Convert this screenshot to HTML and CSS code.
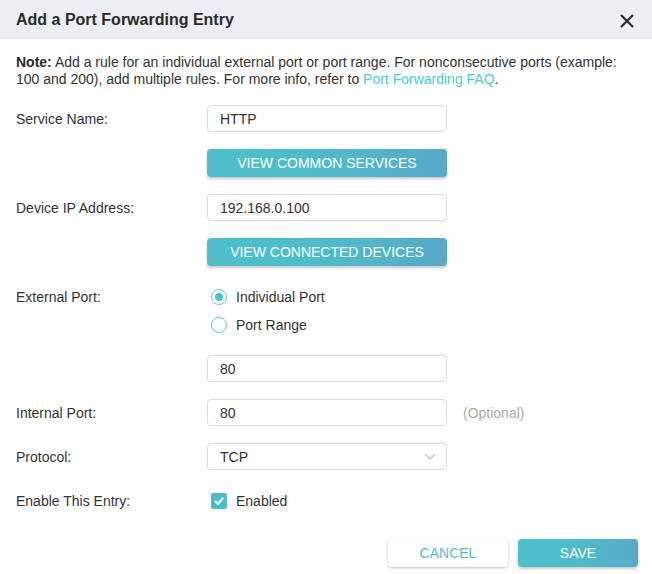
FILE: index.html
```html
<!DOCTYPE html>
<html lang="en">
<head>
<meta charset="utf-8">
<title>Add a Port Forwarding Entry</title>
<link rel="stylesheet" href="styles.css">
</head>
<body>
<div class="dialog">
  <div class="header">
    <h1 class="title">Add a Port Forwarding Entry</h1>
    <button class="close" aria-label="Close">
      <svg width="14" height="14" viewBox="0 0 14 14"><path d="M1 1 L13 13 M13 1 L1 13" stroke="#2b2b2b" stroke-width="2.2" fill="none"/></svg>
    </button>
  </div>
  <div class="content">
    <p class="note"><b>Note:</b> Add a rule for an individual external port or port range. For nonconsecutive ports (example: 100 and 200), add multiple rules. For more info, refer to <a class="link" href="#">Port Forwarding FAQ</a>.</p>
    <div class="form">
      <div class="row">
        <label class="label">Service Name:</label>
        <div class="field"><div class="input">HTTP</div></div>
      </div>
      <div class="row">
        <div class="label"></div>
        <div class="field"><button class="btn primary wide">VIEW COMMON SERVICES</button></div>
      </div>
      <div class="row">
        <label class="label">Device IP Address:</label>
        <div class="field"><div class="input">192.168.0.100</div></div>
      </div>
      <div class="row">
        <div class="label"></div>
        <div class="field"><button class="btn primary wide">VIEW CONNECTED DEVICES</button></div>
      </div>
      <div class="row radios-row">
        <label class="label label-top">External Port:</label>
        <div class="radios">
          <div class="radio-item"><span class="radio checked"></span><span>Individual Port</span></div>
          <div class="radio-item"><span class="radio"></span><span>Port Range</span></div>
        </div>
      </div>
      <div class="row">
        <div class="label"></div>
        <div class="field"><div class="input">80</div></div>
      </div>
      <div class="row">
        <label class="label">Internal Port:</label>
        <div class="field"><div class="input">80</div></div>
        <span class="hint">(Optional)</span>
      </div>
      <div class="row">
        <label class="label">Protocol:</label>
        <div class="field"><div class="input select"><span>TCP</span>
          <svg class="chev" width="12" height="7" viewBox="0 0 12 7"><path d="M1 1 L6 6 L11 1" stroke="#c4c4c4" stroke-width="1.3" fill="none"/></svg>
        </div></div>
      </div>
      <div class="row check-row">
        <label class="label">Enable This Entry:</label>
        <div class="check-item">
          <span class="checkbox"><svg width="10" height="8" viewBox="0 0 10 8"><path d="M1 4 L4 7 L9 1" stroke="#fff" stroke-width="2" fill="none"/></svg></span>
          <span>Enabled</span>
        </div>
      </div>
    </div>
    <div class="footer">
      <button class="btn secondary">CANCEL</button>
      <button class="btn primary">SAVE</button>
    </div>
  </div>
</div>
</body>
</html>
```
FILE: styles.css
```css
* { box-sizing: border-box; }
html, body {
  margin: 0;
  padding: 0;
  background: #fff;
}
body {
  font-family: "Liberation Sans", Arial, sans-serif;
  font-size: 14px;
  color: #333;
}
.dialog {
  width: 652px;
  height: 574px;
  background: #fff;
}
.header {
  height: 39px;
  background: #ebeef2;
  display: flex;
  align-items: center;
  justify-content: space-between;
  padding: 0 18px 0 16px;
}
.title {
  margin: 0;
  font-size: 16px;
  font-weight: bold;
  color: #2b2b2b;
}
.close {
  border: 0;
  background: none;
  padding: 0;
  margin-top: 2px;
  display: flex;
  cursor: pointer;
}
.content {
  padding: 15px 14px 0 16px;
}
.note {
  margin: 0;
  line-height: 17px;
  padding-right: 2px;
}
.note b { color: #2b2b2b; }
.link {
  color: #4acbd6;
  text-decoration: none;
}
.form {
  display: flex;
  flex-direction: column;
  gap: 17px;
  margin-top: 17px;
}
.row {
  display: flex;
  align-items: center;
}
.label {
  width: 191px;
  flex: none;
}
.field {
  width: 240px;
  flex: none;
}
.input {
  height: 27px;
  border: 1px solid #dcdcdc;
  border-radius: 4px;
  padding: 0 12px;
  display: flex;
  align-items: center;
  color: #333;
}
.select {
  justify-content: space-between;
  padding-right: 10px;
}
.hint {
  margin-left: 16px;
  color: #a9a9a9;
}
.btn {
  font-family: "Liberation Sans", Arial, sans-serif;
  font-size: 14px;
  height: 28px;
  border: 0;
  border-radius: 4px;
  cursor: pointer;
  padding: 0;
}
.primary {
  color: #fff;
  background: linear-gradient(90deg, #4dc0cb 0%, #4fbbca 50%, #58a9c8 100%);
  box-shadow: 0 2px 3px rgba(0, 0, 0, 0.22);
}
.wide { width: 240px; }
.secondary {
  color: #4bbfcb;
  background: #fff;
  box-shadow: 0 1px 3px rgba(0, 0, 0, 0.25);
}
.radios-row {
  align-items: flex-start;
  padding: 4px 0 3px;
}
.label-top {
  line-height: 20px;
}
.radios {
  display: flex;
  flex-direction: column;
  gap: 8px;
}
.radio-item, .check-item {
  display: flex;
  align-items: center;
  height: 20px;
  padding-left: 4px;
}
.radio {
  width: 16px;
  height: 16px;
  border: 1.5px solid #62c5d0;
  border-radius: 50%;
  margin-right: 9px;
  display: flex;
  align-items: center;
  justify-content: center;
}
.radio.checked::after {
  content: "";
  width: 8px;
  height: 8px;
  border-radius: 50%;
  background: #4bbfcb;
}
.check-row {
  height: 27px;
}
.checkbox {
  width: 16px;
  height: 16px;
  border-radius: 2px;
  background: #4bbdca;
  margin-right: 9px;
  display: flex;
  align-items: center;
  justify-content: center;
}
.footer {
  display: flex;
  justify-content: flex-end;
  gap: 10px;
  margin-top: 25px;
}
.footer .btn {
  width: 120px;
  height: 28px;
}
```
